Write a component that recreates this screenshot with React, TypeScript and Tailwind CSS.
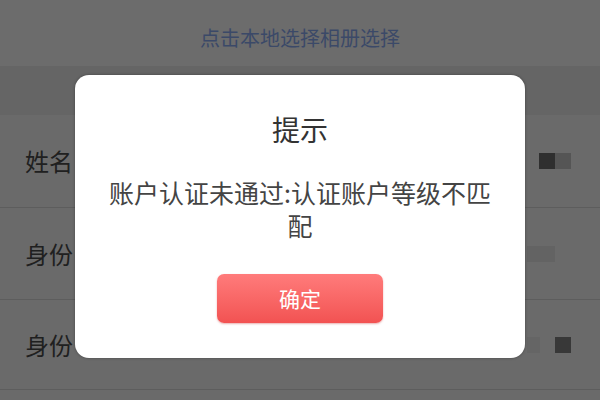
export default function App() {
  const rows = [
    { label: '姓名', blocks: [{ w: 16, c: 'bg-[#2f2f2f]' }, { w: 16, c: 'bg-[#555555]' }] },
    { label: '身份', blocks: [{ w: 28, c: 'bg-[#636363]' }, { w: 16, c: 'bg-[#6a6a6a]' }] },
    { label: '身份', blocks: [{ w: 13, c: 'bg-[#656565]' }, { w: 15, c: 'bg-[#6a6a6a]' }, { w: 16, c: 'bg-[#383838]' }] },
  ];

  return (
    <div
      className="relative w-[600px] h-[400px] overflow-hidden bg-[#6a6a6a]"
      style={{ fontFamily: '"Noto Sans CJK SC", "Noto Sans", sans-serif' }}
    >
      {/* page underneath */}
      <div className="h-[66px] bg-[#6c6c6c] flex items-center justify-center pt-[10px]">
        <span className="text-[20px] text-[#3b4968] leading-none">点击本地选择相册选择</span>
      </div>
      <div className="h-[49px] bg-[#656565]" />
      {rows.map((r, i) => (
        <div
          key={i}
          className={`flex items-center justify-between pl-[25px] pr-[29px] border-b border-[#5d5d5d] ${i === 0 ? 'h-[93px]' : i === 1 ? 'h-[92px]' : 'h-[90px]'}`}
        >
          <span className="text-[24px] text-[#202020] leading-none">{r.label}</span>
          <div className="flex">
            {r.blocks.map((b, j) => (
              <div key={j} className={`h-[16px] ${b.c}`} style={{ width: b.w }} />
            ))}
          </div>
        </div>
      ))}
      <div className="h-[20px] bg-[#6a6a6a]" />

      {/* modal */}
      <div className="absolute left-[75px] top-[75px] w-[450px] h-[283px] bg-white rounded-[14px] shadow-[0_0_3px_rgba(0,0,0,0.35)] flex flex-col items-center pt-[35px]">
        <h2 className="text-[28px] leading-[39px] text-[#333333] font-normal">提示</h2>
        <p className="mt-[27px] px-[32px] text-center text-[25px] leading-[33px] text-[#444444]">
          账户认证未通过:认证账户等级不匹配
        </p>
        <button className="mt-[32px] w-[166px] h-[49px] rounded-[7px] bg-gradient-to-b from-[#ff7b7b] to-[#f25252] text-white text-[21px] shadow-[0_1px_2px_rgba(200,60,60,0.4)]">
          确定
        </button>
      </div>
    </div>
  );
}
